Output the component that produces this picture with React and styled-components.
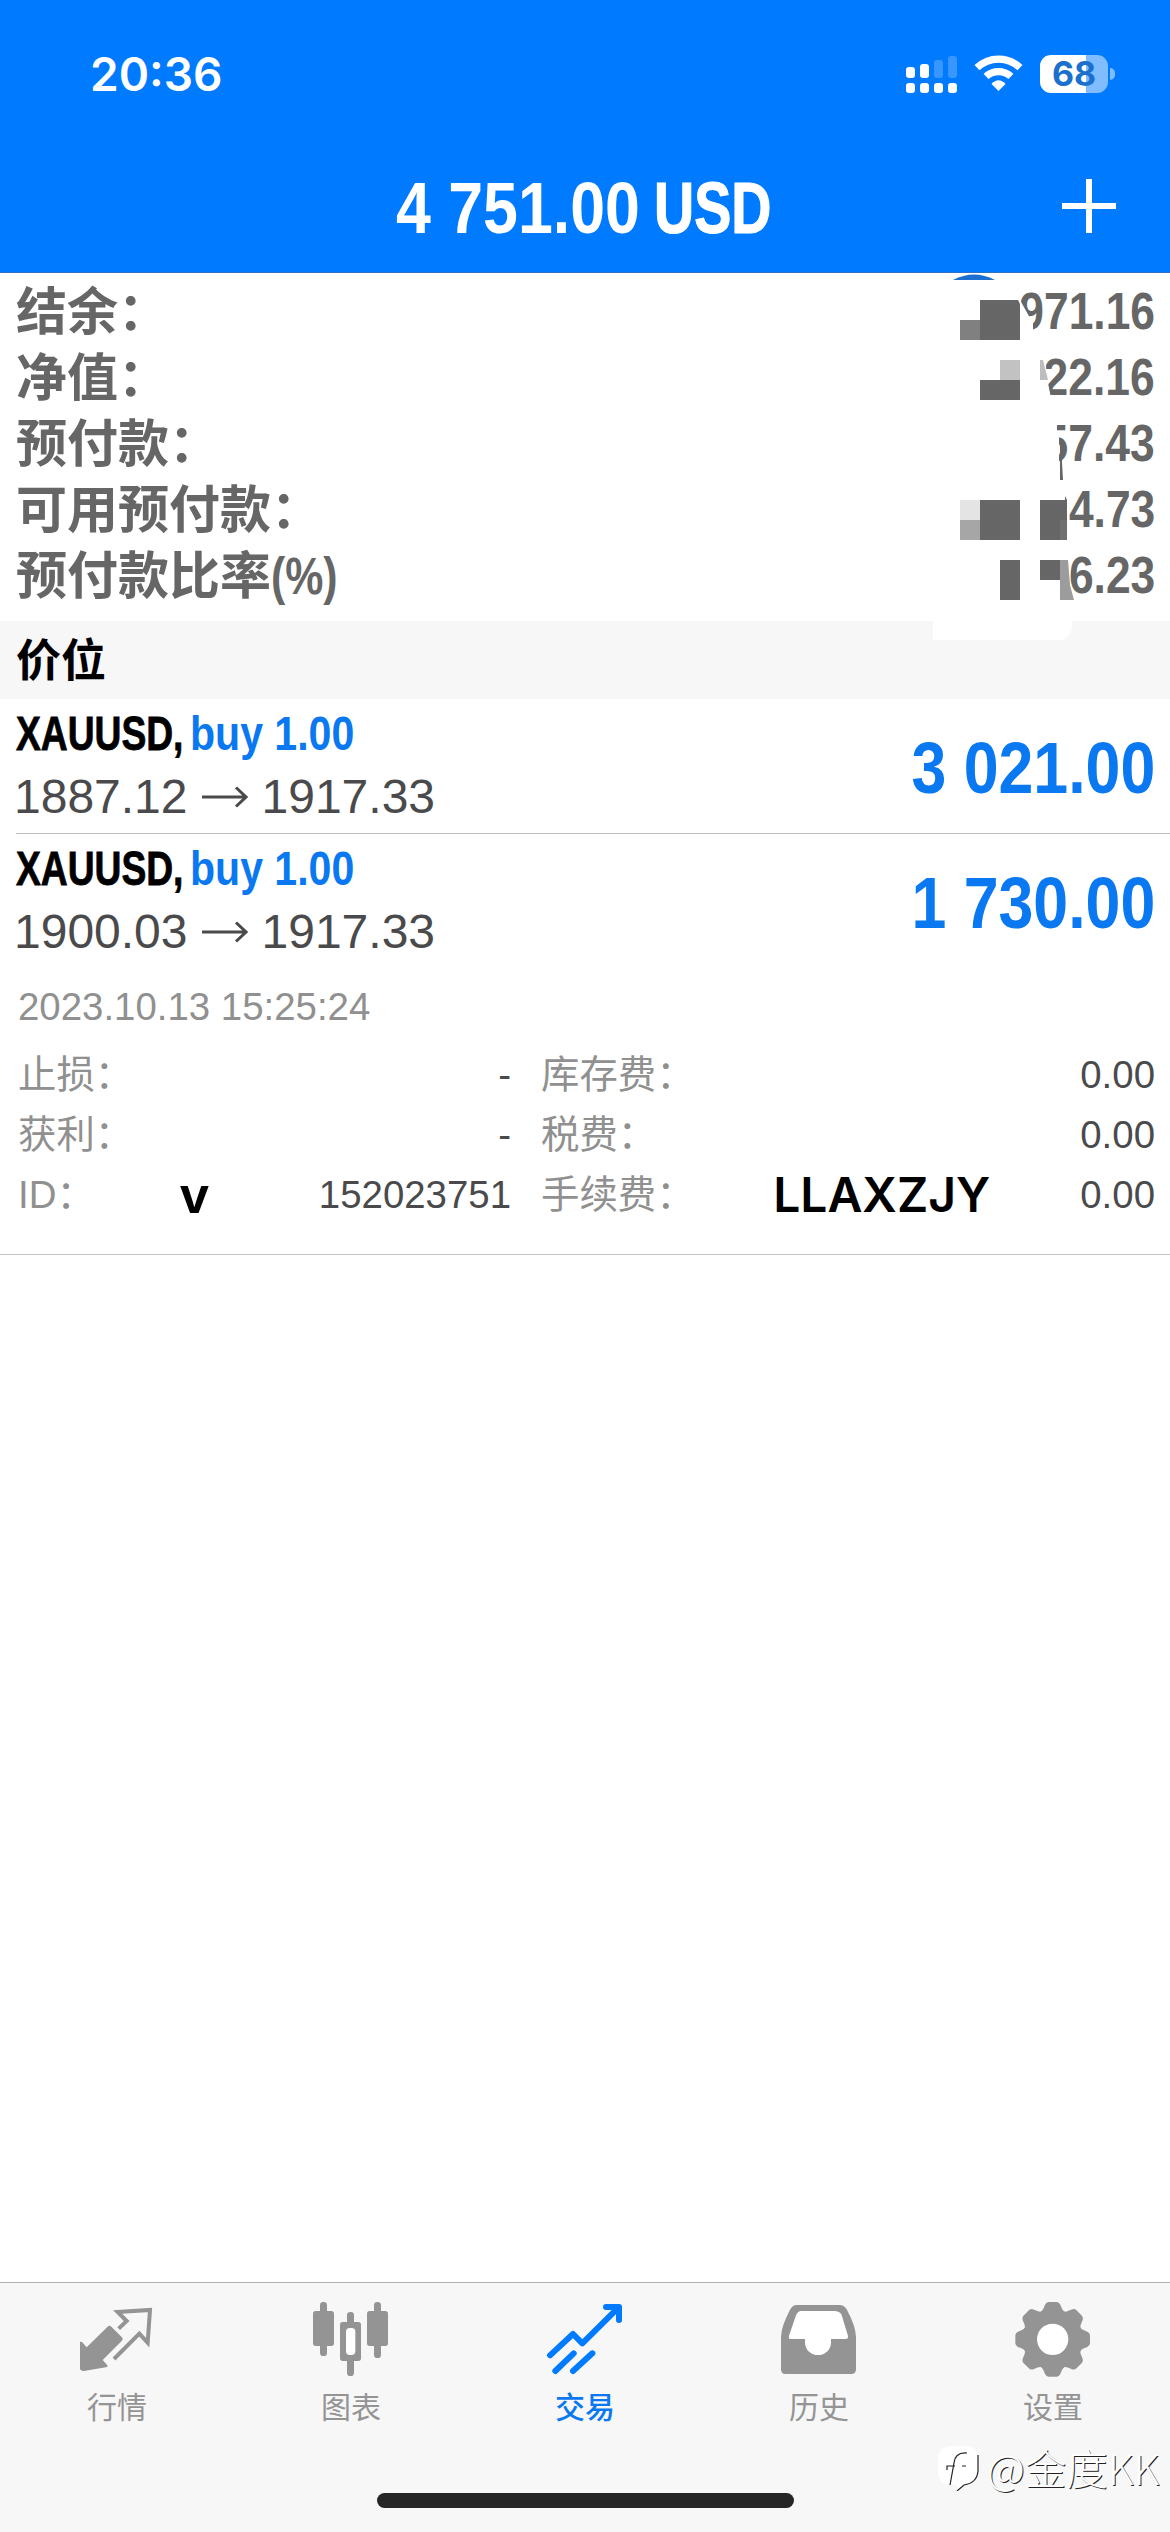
import React from 'react';
import styled, { createGlobalStyle } from 'styled-components';

const GlobalStyle = createGlobalStyle`
  * {
    box-sizing: border-box;
  }

  body {
    margin: 0;
    background: #fff;
    font-family: 'Liberation Sans', 'Noto Sans CJK SC', sans-serif;
  }
`;

const Screen = styled.div`
  position: relative;
  width: 1170px;
  height: 2532px;
  overflow: hidden;
  display: flex;
  flex-direction: column;
  background: #fff;
`;

const Header = styled.header`
  height: 273px;
  background: #007aff;
  border-bottom: 1px solid #2f70c0;
  color: #fff;
`;

const StatusBar = styled.div`
  height: 148px;
  padding: 0 55px 0 90px;
  display: flex;
  align-items: center;
  justify-content: space-between;
`;

const Clock = styled.span`
  font-family: Inter, sans-serif;
  font-size: 46px;
  font-weight: 600;
  line-height: 60px;
`;

const StatusIcons = styled.div`
  display: flex;
  align-items: center;
  gap: 17px;
`;

const WifiSvg = styled.svg`
  margin-bottom: 2px;
`;

const BatteryWrap = styled.div`
  display: flex;
  align-items: center;
  gap: 2px;
`;

const BatteryBody = styled.div`
  width: 68px;
  height: 38px;
  border-radius: 11px;
  background: linear-gradient(to right, #fff 68%, rgba(255, 255, 255, 0.5) 68%);
  color: #1a70cc;
  font-family: Inter, sans-serif;
  font-size: 34px;
  font-weight: 700;
  line-height: 38px;
  text-align: center;
`;

const BatteryCap = styled.div`
  width: 5px;
  height: 12px;
  border-radius: 0 5px 5px 0;
  background: rgba(255, 255, 255, 0.5);
`;

const NavBar = styled.div`
  height: 120px;
  padding-right: 54px;
  padding-left: 51px;
  display: grid;
  grid-template-columns: 1fr auto 1fr;
  align-items: center;
`;

const NavTitle = styled.h1`
  grid-column: 2;
  margin: 0;
  display: flex;
  gap: 14px;
  font-size: 72px;
  font-weight: 700;
  line-height: 120px;
`;

const AddButton = styled.button`
  justify-self: end;
  margin-bottom: 4px;
  padding: 0;
  border: 0;
  background: none;
  display: flex;
`;

// Bold text squeezed horizontally, like a condensed face
const Narrow = styled.span`
  display: inline-block;
  white-space: nowrap;
  width: ${props => (props.$width ? `${props.$width}px` : 'auto')};
  transform: scaleX(${props => props.$scale});
  transform-origin: ${props => props.$origin || 'left'} center;
  -webkit-text-stroke: ${props => props.$stroke || 0}px currentColor;
`;

const Summary = styled.section`
  position: relative;
  height: 348px;
  padding: 6px 15px 0 16px;
`;

const SummaryRow = styled.div`
  height: 66px;
  display: flex;
  justify-content: space-between;
  color: #666;
  font-size: 51px;
  font-weight: 700;
  line-height: 66px;
`;

const SummaryLabel = styled.span`
  line-height: 68px;
`;

const Redaction = styled.svg`
  position: absolute;
  left: 930px;
  top: 0;
`;

const SectionTitle = styled.h2`
  margin: 0;
  height: 78px;
  padding-left: 16px;
  background: #f7f7f7;
  color: #000;
  font-size: 45px;
  font-weight: 700;
  line-height: 81px;
`;

const Position = styled.div`
  height: 135px;
  margin-left: 16px;
  padding: 3px 15px 0 0;
  display: flex;
  justify-content: space-between;
  border-bottom: 1px solid ${props => (props.$last ? 'transparent' : '#bdbdbf')};
`;

const Symbol = styled.div`
  height: 63px;
  display: flex;
  font-size: 48px;
  font-weight: 700;
  line-height: 63px;
`;

const Side = styled.span`
  color: #0a78f0;
`;

const Prices = styled.div`
  margin-left: -2px;
  display: flex;
  align-items: center;
  gap: 14px;
  color: #4a4a4c;
  font-size: 48px;
  line-height: 63px;
`;

const Profit = styled.div`
  color: #0a78f0;
  font-size: 72px;
  font-weight: 700;
  line-height: 133px;
`;

const Details = styled.div`
  height: 286px;
  padding: 0 15px 0 18px;
  border-bottom: 1px solid #c4c4c6;
  color: #909090;
  font-size: 38.4px;
`;

const OpenTime = styled.div`
  line-height: 76px;
`;

const DetailGrid = styled.div`
  display: grid;
  grid-template-columns: 493px 614px;
  column-gap: 30px;
  grid-auto-rows: 60px;
`;

const DetailCell = styled.div`
  display: flex;
  justify-content: space-between;
  line-height: 60px;
`;

const DetailValue = styled.span`
  color: #4a4a4c;
`;

const Mark = styled.span`
  margin-left: auto;
  margin-right: ${props => props.$gap}px;
  color: #000;
  font-family: ${props => props.$font};
  font-size: ${props => props.$size}px;
  font-weight: ${props => props.$weight};
  line-height: 60px;
`;

const Blank = styled.div`
  flex: 1;
`;

const TabBar = styled.nav`
  height: 250px;
  padding-top: 17px;
  background: #f7f7f7;
  border-top: 1px solid #b2b2b2;
`;

const Tabs = styled.div`
  display: grid;
  grid-template-columns: repeat(5, 234px);
`;

const Tab = styled.div`
  display: flex;
  flex-direction: column;
  align-items: center;
  color: ${props => (props.$active ? '#0a78f0' : '#949494')};
`;

const TabLabel = styled.span`
  font-size: 30px;
  font-weight: ${props => (props.$active ? 500 : 400)};
  line-height: 60px;
`;

const HomeIndicator = styled.div`
  width: 417px;
  height: 15px;
  margin: 55px auto 0;
  border-radius: 8px;
  background: #262626;
`;

const Watermark = styled.div`
  position: absolute;
  left: 936px;
  top: 2442px;
  display: flex;
  align-items: center;
  gap: 7px;
  color: #fff;
  font-family: 'Noto Sans CJK SC', sans-serif;
  font-size: 41.5px;
  font-weight: 300;
  line-height: 50px;
  text-shadow: 1px 1px 0 #222;
`;

const Signal = () => (
  <svg width="51" height="38" viewBox="0 0 51 38" fill="#fff">
    <rect x="0" y="12" width="9" height="11" rx="3" />
    <rect x="14" y="9" width="9" height="14" rx="3" />
    <rect x="28" y="5" width="9" height="18" rx="3" opacity="0.22" />
    <rect x="42" y="1" width="9" height="22" rx="3" opacity="0.22" />
    <rect x="0" y="28" width="9" height="10" rx="3" />
    <rect x="14" y="28" width="9" height="10" rx="3" />
    <rect x="28" y="28" width="9" height="10" rx="3" />
    <rect x="42" y="28" width="9" height="10" rx="3" />
  </svg>
);

const Wifi = () => (
  <WifiSvg width="49" height="36" viewBox="0 0 49 36" fill="none" stroke="#fff" strokeWidth="7.2">
    <path d="M3 12.7A31 31 0 0 1 46 12.7" />
    <path d="M12 21.4A18.5 18.5 0 0 1 37 21.4" />
    <path d="M17.5 29Q24.5 21.5 31.5 29L24.5 36Z" fill="#fff" stroke="none" />
  </WifiSvg>
);

const Arrow = () => (
  <svg width="46" height="22" viewBox="0 0 46 22" fill="none" stroke="currentColor" strokeWidth="3">
    <path d="M0 11H44M34 1.5L44 11L34 20.5" />
  </svg>
);

const Icon = ({ children }) => (
  <svg width="78" height="78" viewBox="0 0 234 234" fill="currentColor">
    {children}
  </svg>
);

const QuotesIcon = () => (
  <Icon>
    <path d="M6 125L12 126L26 142L88 81Q94 74 100 80L131 111Q137 117 131 123L74 180L88 196V201L18 213Q10 214 6 208Z" />
    <path
      d="M122 86L146 63L119 36L216 30L209 128L184 101L108 177"
      fill="none"
      stroke="currentColor"
      strokeWidth="12"
    />
  </Icon>
);

const ChartIcon = () => (
  <Icon>
    <rect x="24" y="6" width="21" height="162" rx="10" />
    <rect x="3" y="33" width="63" height="105" rx="8" />
    <rect x="105" y="36" width="21" height="192" rx="10" />
    <rect x="84" y="66" width="63" height="117" rx="8" />
    <rect x="102" y="84" width="28" height="81" rx="11" fill="#fff" />
    <rect x="186" y="6" width="21" height="168" rx="10" />
    <rect x="165" y="33" width="63" height="105" rx="8" />
  </Icon>
);

const TradeIcon = () => (
  <Icon>
    <g fill="none" stroke="#007aff" strokeWidth="18" strokeLinecap="round">
      <path d="M12 166L81 102L109 130L217 23" strokeLinejoin="round" />
      <path d="M180 21H219V60" strokeLinejoin="round" />
      <path d="M28 213L83 160M81 213L139 160" />
    </g>
  </Icon>
);

const HistoryIcon = () => (
  <Icon>
    <path d="M50 15H178Q192 15 200 28Q228 80 228 112V208Q228 222 214 222H16Q3 222 3 208V112Q3 80 31 28Q38 15 50 15Z" />
    <path
      d="M64 33H162Q180 33 185 45L204 108Q206 117 196 117H153V128A39 37 0 0 1 75 128V117H34Q24 117 27 107L48 46Q53 33 64 33Z"
      fill="#fff"
    />
  </Icon>
);

const SettingsIcon = () => (
  <Icon>
    <circle cx="116" cy="118" r="90" />
    {[0, 45, 90, 135, 180, 225, 270, 315].map(angle => (
      <path
        key={angle}
        transform={`translate(116 118) rotate(${angle})`}
        d="M-36 -82Q-30 -86 -27 -94L-23 -104Q-19 -112 -12 -112H12Q19 -112 23 -104L27 -94Q30 -86 36 -82Z"
      />
    ))}
    <circle cx="116" cy="118" r="47" fill="#fff" />
  </Icon>
);

const summary = [
  { label: '结余：', value: '971.16' },
  { label: '净值：', value: '22.16' },
  { label: '预付款：', value: '57.43' },
  { label: '可用预付款：', value: '4.73' },
  { label: '预付款比率', suffix: '(%)', value: '6.23' },
];

const positions = [
  { symbol: 'XAUUSD,', side: 'buy 1.00', open: '1887.12', current: '1917.33', profit: '3 021.00' },
  { symbol: 'XAUUSD,', side: 'buy 1.00', open: '1900.03', current: '1917.33', profit: '1 730.00' },
];

const tabs = [
  { label: '行情', icon: QuotesIcon },
  { label: '图表', icon: ChartIcon },
  { label: '交易', icon: TradeIcon, active: true },
  { label: '历史', icon: HistoryIcon },
  { label: '设置', icon: SettingsIcon },
];

const App = () => (
  <Screen>
    <GlobalStyle />
    <Header>
      <StatusBar>
        <Clock>20:36</Clock>
        <StatusIcons>
          <Signal />
          <Wifi />
          <BatteryWrap>
            <BatteryBody>68</BatteryBody>
            <BatteryCap />
          </BatteryWrap>
        </StatusIcons>
      </StatusBar>
      <NavBar>
        <NavTitle>
          <Narrow $scale={0.87} $width={244}>4 751.00</Narrow>
          <Narrow $scale={0.772} $width={117} $stroke={1.2}>USD</Narrow>
        </NavTitle>
        <AddButton>
          <svg width="54" height="54" viewBox="0 0 54 54" stroke="#fff" strokeWidth="6">
            <path d="M0 27H54M27 0V54" />
          </svg>
        </AddButton>
      </NavBar>
    </Header>

    <Summary>
      {summary.map(row => (
        <SummaryRow key={row.label}>
          <SummaryLabel>
            {row.label}
            {row.suffix && <Narrow $scale={0.84}>{row.suffix}</Narrow>}
          </SummaryLabel>
          <Narrow $scale={0.87} $origin="right">{row.value}</Narrow>
        </SummaryRow>
      ))}
      {/* Mosaic over the leading digits */}
      <Redaction width="150" height="368" viewBox="930 273 150 368">
        <path d="M953 280Q974 269 995 280Z" fill="#1a6fd0" />
        <g fill="#fff">
          <path d="M1012 296L1020 300L1030 318H1033V338H1012Z" />
          <path d="M1038 355H1045L1047 378L1051 398H1038Z" />
          <path d="M1040 420H1057V432L1059 438V466H1040Z" />
          <path d="M933 618H1072V628Q1070 636 1063 640H933Z" />
        </g>
        <g fill="#666">
          <path d="M980 300H1018L1020 304V340H980Z" />
          <path d="M980 380H1020V400H980Z" />
          <path d="M1060 440H1063L1062 462L1063 480H1060Z" />
          <path d="M980 500H1020V540H980Z" />
          <path d="M1040 500H1065V496L1067 500V540H1040Z" />
          <path d="M1000 560H1020V600H1000Z" />
          <path d="M1040 560H1060V580H1040Z" />
        </g>
        <path d="M960 320H980V340H960Z" fill="#808080" />
        <path d="M1000 360H1020V380H1000Z" fill="#c2c2c2" />
        <path d="M1040 360H1043L1048 380H1040Z" fill="#bdbdbd" />
        <path d="M960 500H980V520H960Z" fill="#e4e4e4" />
        <path d="M960 520H980V540H960Z" fill="#a6a6a6" />
        <path d="M1060 520H1067V540H1060Z" fill="#707070" />
        <path d="M1060 560H1068L1070 585L1074 600H1060Z" fill="#9c9c9c" />
      </Redaction>
    </Summary>

    <SectionTitle>价位</SectionTitle>
    {positions.map((item, index) => (
      <Position key={item.open} $last={index === positions.length - 1}>
        <div>
          <Symbol>
            <Narrow $scale={0.775} $width={174} $stroke={0.8}>{item.symbol}</Narrow>
            <Side>
              <Narrow $scale={0.855}>{item.side}</Narrow>
            </Side>
          </Symbol>
          <Prices>
            <span>{item.open}</span>
            <Arrow />
            <span>{item.current}</span>
          </Prices>
        </div>
        <Profit>
          <Narrow $scale={0.87} $origin="right">{item.profit}</Narrow>
        </Profit>
      </Position>
    ))}

    <Details>
      <OpenTime>2023.10.13 15:25:24</OpenTime>
      <DetailGrid>
        <DetailCell>
          止损：<DetailValue>-</DetailValue>
        </DetailCell>
        <DetailCell>
          库存费：<DetailValue>0.00</DetailValue>
        </DetailCell>
        <DetailCell>
          获利：<DetailValue>-</DetailValue>
        </DetailCell>
        <DetailCell>
          税费：<DetailValue>0.00</DetailValue>
        </DetailCell>
        <DetailCell>
          ID：
          <Mark $font="'Liberation Sans', sans-serif" $size={52} $weight={700} $gap={110}>v</Mark>
          <DetailValue>152023751</DetailValue>
        </DetailCell>
        <DetailCell>
          手续费：
          <Mark $font="Inter, sans-serif" $size={48} $weight={600} $gap={90}>LLAXZJY</Mark>
          <DetailValue>0.00</DetailValue>
        </DetailCell>
      </DetailGrid>
    </Details>

    <Blank />

    <TabBar>
      <Tabs>
        {tabs.map(({ label, icon: TabIcon, active }) => (
          <Tab key={label} $active={active}>
            <TabIcon />
            <TabLabel $active={active}>{label}</TabLabel>
          </Tab>
        ))}
      </Tabs>
      <HomeIndicator />
    </TabBar>

    <Watermark>
      <svg width="44" height="48" viewBox="0 0 44 48" fill="none">
        <path
          d="M16 3H30Q42 3 42 17V26Q42 40 28 42L21 48V42H14Q2 42 2 28V17Q2 3 16 3Z"
          fill="#fff"
        />
        <path d="M42 12V28Q41 40 28 42L21 48" stroke="#222" strokeWidth="1.2" />
        <path d="M31 10Q19 9 18 20L14 42M11 27V23H19M26 23H30" stroke="#222" strokeWidth="1.2" />
      </svg>
      <span>@金度KK</span>
    </Watermark>
  </Screen>
);

export default App;
